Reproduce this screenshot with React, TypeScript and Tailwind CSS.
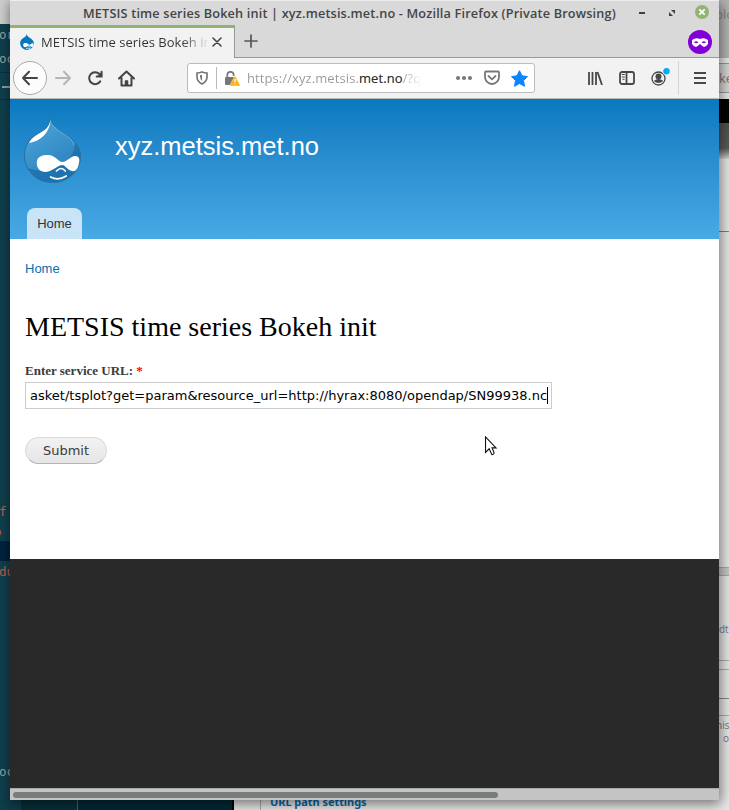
import React from 'react';

function Drop({ className, small = false }: { className: string; small?: boolean }) {
  return (
    <svg className={className} viewBox="0 0 58 65" preserveAspectRatio="none">
      <defs>
        <linearGradient id="dropBody" x1="0" y1="0" x2="0.6" y2="1">
          <stop offset="0" stopColor="#4fa8dc" />
          <stop offset="0.5" stopColor="#3c94cc" />
          <stop offset="1" stopColor="#2a80bb" />
        </linearGradient>
      </defs>
      <path d="M27 0C29 8 35 12 42 16C52 22 57.5 30 57.5 38C57.5 53 45 64.5 29 64.5C12 64.5 .5 52 .5 37C.5 25 8 19 17 14C23 11 26 8 27 0Z" fill={small ? '#0678be' : 'url(#dropBody)'} stroke={small ? 'none' : '#286f9f'} strokeWidth="1" />
      {!small && (
        <>
          <path d="M51 25C53 35 45 43 34 49C25 54 12 53 4 50C10 60 18 64 29 64C45 64 57 53 57 38C57 32 55 28 51 25Z" fill="#1769a4" opacity="0.65" />
          <path d="M27 1C27 12 19 23 5 25C8 19 13 17 18 14C23 11 26 8 27 1Z" fill="#fff" />
          <path d="M29 7C32 13 50 18 51 28" stroke="#80bfe4" strokeWidth="1" fill="none" opacity="0.6" />
        </>
      )}
      <path d="M13 45C13 38 19 37 24 37C32 37 35 44 39 44C44 44 47 38 52 38C56 38 57 41 56 45C55 51 52 54 49 53C44 52 42 47 39 47C34 47 30 53 22 54C16 54 13 50 13 45Z" fill="#fff" />
      <path d="M33 53Q38 48 42 53M27 59Q35 63 43 58" fill="none" stroke="#fff" strokeWidth={small ? 3 : 1.7} strokeLinecap="round" />
    </svg>
  );
}

function EditorWindow() {
  return (
    <div className="absolute left-0 top-0 flex h-[810px] w-[234px] flex-col overflow-hidden bg-[#10404e] font-['DejaVu_Sans_Mono',monospace] text-[12.5px] text-[#94a6a7]">
      <div className="h-6 shrink-0 bg-[#cfcfcf]" />
      <div className="h-[25px] shrink-0 pt-[2px] leading-[18px]"><span className="-ml-px">or</span></div>
      <div className="h-[24px] shrink-0 border-b border-[#0a303b] leading-[20px]"><span className="-ml-px">oc</span></div>
      <div className="h-[27px] shrink-0 border-b border-[#0a303b] pl-[2px] pt-[13px]"><div className="h-[2px] w-5 bg-[#8ba1a6]" /></div>
      <div className="h-[401px] shrink-0" />
      <div className="h-[20px] shrink-0 leading-[21px] text-[#c25c50]"><span className="-ml-px">f</span></div>
      <div className="h-[20px] shrink-0 overflow-hidden leading-[22px] text-[#c25c50]"><div className="-ml-[6px]">o</div></div>
      <div className="h-[20px] shrink-0 bg-[#002340]" />
      <div className="h-[200px] shrink-0 leading-[22px] text-[#c25c50]"><span className="-ml-px">du</span></div>
      <div className="h-[38px] shrink-0 leading-[22px]"><span className="-ml-px">oc</span></div>
      <div className="flex h-3 shrink-0">
        <div className="w-[21px] bg-[#0e3d4b]" />
        <div className="w-[57px] border-r border-[#47656d] bg-[#073039]" />
        <div className="grow border-r-2 border-black bg-[#002a36]" />
      </div>
    </div>
  );
}

function BackWindow() {
  return (
    <div className="absolute left-[234px] top-0 h-[810px] w-[495px] bg-[#e8e8e8] font-['Open_Sans',sans-serif] text-[13px] text-[#777]">
      <div className="ml-[485px] flex h-[798px] flex-col overflow-hidden">
        <div className="h-[58px] shrink-0 bg-[#b5b5b5] pt-[6px] leading-4 text-[#858585]"><span className="-ml-1">blo</span></div>
        <div className="h-[41px] shrink-0 pt-[5px]"><div className="h-[30px] border-y border-[#999] bg-[#d5d5d5] leading-7">ke</div></div>
        <div className="h-[24px] shrink-0 overflow-hidden bg-black text-[11px] leading-6 text-[#9b9270]"><span className="-ml-[5px]">s</span></div>
        <div className="h-9 shrink-0 bg-linear-to-b from-[#505050] via-[#5a5a5a] via-70% to-[#d5d5d5]" />
        <div className="h-[73px] shrink-0 border-b border-[#808080]" />
        <div className="h-[335px] shrink-0" />
        <div className="h-[9px] shrink-0 border-y border-[#aaa] bg-[#c8c8c8]" />
        <div className="h-[85px] shrink-0 border-b border-[#aaa] pt-[46px] text-[10px] leading-[15px]">dt:</div>
        <div className="h-[9px] shrink-0 border-b border-[#aaa]" />
        <div className="h-[29px] shrink-0 border-b border-[#888]" />
        <div className="h-[17px] shrink-0 border-b border-[#aaa]" />
        <div className="flex flex-col pt-[3px] text-[10px] leading-[13px]"><span className="-ml-[3px]">his</span><span className="pl-1">o</span></div>
      </div>
      <div className="ml-[26px] border-l border-[#aaa] pl-[9px] font-['Noto_Sans',sans-serif] text-[11px] font-bold leading-[12px] text-[#0a66a5]"><div className="-mt-[2px] pb-[2px] tracking-[-0.05px]">URL path settings</div></div>
    </div>
  );
}

function TitleBar() {
  return (
    <div className="flex h-[25px] shrink-0 items-center border-t border-[#eee] bg-[#d9d9d9] pl-[73px]">
      <div className="w-[556px] whitespace-nowrap font-['Open_Sans',sans-serif] text-[12.7px] font-semibold leading-6 tracking-[0.165px] text-[#454545]">METSIS time series Bokeh init | xyz.metsis.met.no - Mozilla Firefox (Private Browsing)</div>
      <div className="-mt-px h-[2px] w-[6px] bg-[#404040]" />
      <svg className="-mt-px ml-[23px] size-[8px]" viewBox="0 0 8 8" fill="#404040"><path d="M3 1h4v4L3 1ZM1 3l4 4H1V3Z" /></svg>
      <div className="-mt-[2px] ml-[19px] flex size-[14px] items-center justify-center rounded-full bg-[#92b372]"><svg className="size-[8px]" viewBox="0 0 8 8"><path d="M1.3 1.3l5.4 5.4M6.7 1.3L1.3 6.7" stroke="white" strokeWidth="1.8" /></svg></div>
    </div>
  );
}

function TabBar() {
  return (
    <div className="flex h-[33px] shrink-0 bg-[#d9d9d9]">
      <div className="flex w-[225px] items-center border-r border-t-[3px] border-r-[#999] border-t-[#92b372] bg-[#f2f2f2] pl-[10px]">
        <Drop small className="-mt-[3px] h-4 w-[14px]" />
        <div className="-mt-[3px] ml-[7px] w-[168px] overflow-hidden whitespace-nowrap bg-linear-to-r from-[#333] from-84% to-[#33333300] bg-clip-text font-['Open_Sans',sans-serif] text-[13px] leading-6 tracking-[0.02px] text-transparent">METSIS time series Bokeh init</div>
        <svg className="-mt-[2px] ml-[3px] size-[10px]" viewBox="0 0 10 10" stroke="#444" strokeWidth="1.6" strokeLinecap="round"><path d="M1 1l8 8M9 1L1 9" /></svg>
      </div>
      <div className="flex grow items-start justify-between border-b border-[#999] pl-[9px] pr-[7px]">
        <svg className="mt-[9px] size-[14px]" viewBox="0 0 14 14" stroke="#555" strokeWidth="1.7" strokeLinecap="round"><path d="M7 1v12M1 7h12" /></svg>
        <div className="mt-[5px] flex size-6 items-center justify-center rounded-full bg-[#8000d7]">
          <svg className="h-[9px] w-4" viewBox="0 0 16 9"><path fill="white" fillRule="evenodd" d="M0 2Q4-1 8 1Q12-1 16 2V6Q14 9 12 9Q10 8 8 6Q6 8 4 9Q2 9 0 6ZM2 4.5Q4 1.8 6.5 4.5Q4 6 2 4.5M9.5 4.5Q12 1.8 14 4.5Q12 6 9.5 4.5" /></svg>
        </div>
      </div>
    </div>
  );
}

function NavBar() {
  return (
    <div className="flex h-[41px] shrink-0 items-center border-b border-[#b8b8b8] bg-[#f2f2f2] pl-[3px] font-['Open_Sans',sans-serif]">
      <div className="flex size-[34px] items-center justify-center rounded-full border border-[#aaa] bg-[#fcfcfc]"><svg className="size-4" viewBox="0 0 16 16" fill="none" stroke="#444" strokeWidth="2" strokeLinecap="round" strokeLinejoin="round"><path d="M15 8H1M7 1.8L1 8l6 6.2" /></svg></div>
      <svg className="ml-[8px] size-4" viewBox="0 0 16 16" fill="none" stroke="#b5b5b5" strokeWidth="2" strokeLinecap="round" strokeLinejoin="round"><path d="M1 8h14M9 1.8L15 8l-6 6.2" /></svg>
      <svg className="ml-[16px] size-4" viewBox="0 0 16 16" fill="none" stroke="#444" strokeWidth="2" strokeLinecap="round"><path d="M13.2 11.4A6 6 0 1 1 12.5 4M14.6 1.8v4.7H9.7" /><path d="M10.2 6.5h4.4V2Z" fill="#444" stroke="none" /></svg>
      <svg className="ml-[15px] size-[17px]" viewBox="0 0 17 17" fill="none" stroke="#444" strokeWidth="2" strokeLinejoin="round" strokeLinecap="round"><path d="M1 8.5l7.5-7 7.5 7M3.5 8V15.5h10V8" /><path d="M7.5 15v-4h2v4" fill="#444" strokeWidth="1.5" /></svg>
      <div className="ml-[52px] flex h-[30px] w-[348px] items-center rounded-[3px] border border-[#bcbcbc] bg-white pl-2">
        <svg className="h-[14px] w-[12px]" viewBox="0 0 12 14" fill="none" stroke="#777" strokeWidth="1.7"><path d="M1 2Q3.5 2 6 1Q8.5 2 11 2V6Q11 10.5 6 13Q1 10.5 1 6Z" /><path d="M4 4.3L6 3.7V10Q4 8 4 5.5Z" fill="#777" stroke="none" /></svg>
        <div className="ml-[8px] h-[22px] w-px bg-[#bbb]" />
        <svg className="ml-[8px] h-[15px] w-[15px]" viewBox="0 0 15 15"><path d="M2.3 7V4a3.2 3.2 0 0 1 6.4 0v1" fill="none" stroke="#777" strokeWidth="1.7" /><rect y="6" width="10" height="8" rx="1" fill="#777" /><path d="M10 4.5L15 14a1 1 0 0 1-.5 1h-9a1 1 0 0 1-.5-1Z" fill="#ffae14" stroke="white" strokeWidth=".4" /><path d="M10 8v3.2M10 12.5v1.1" stroke="white" strokeWidth="1.3" /></svg>
        <div className="ml-[7px] w-[173px] overflow-hidden whitespace-nowrap bg-linear-to-r from-[#999] from-90% to-[#99999910] bg-clip-text text-[13px] leading-6 tracking-[0.09px] text-transparent">https://xyz.metsis.<span className="text-[#333]">met.no</span>/?q</div>
        <div className="ml-9 flex gap-[2px]"><i className="size-[4px] rounded-full bg-[#777]" /><i className="size-[4px] rounded-full bg-[#777]" /><i className="size-[4px] rounded-full bg-[#777]" /></div>
        <svg className="ml-[12px] size-4" viewBox="0 0 16 16" fill="none" stroke="#777" strokeWidth="1.8" strokeLinecap="round" strokeLinejoin="round"><path d="M2 1.5h12q1 0 1 1V7a7 7 0 0 1-14 0V2.5q0-1 1-1Z" /><path d="M4.5 6L8 9.3 11.5 6" /></svg>
        <svg className="ml-[11px] size-[17px]" viewBox="0 0 17 17"><path d="M8.5.7l2.5 5.1 5.5.8-4 3.9 1 5.8-5-2.8-5 2.8 1-5.8-4-3.9 5.5-.8Z" fill="#0a84ff" stroke="#0a84ff" strokeLinejoin="round" /></svg>
      </div>
      <svg className="ml-[52px] h-[14px] w-4" viewBox="0 0 16 14" stroke="#484848" strokeWidth="1.8"><path d="M2 1v13M5.5 1v13M9 1v13M10.5 1l4.5 13" /></svg>
      <svg className="ml-[16px] h-[14px] w-4" viewBox="0 0 16 14" fill="none" stroke="#484848" strokeWidth="1.8"><rect x="1" y="1" width="14" height="12" rx="2" /><path d="M7.5 1v12" /><path d="M2.8 3.5h3M2.8 6h3M3.5 8.3h2" strokeWidth="1" /></svg>
      <svg className="mb-[3px] ml-[16px] h-[18px] w-[19px]" viewBox="0 0 19 18"><circle cx="7.5" cy="10.5" r="6.5" fill="none" stroke="#484848" strokeWidth="1.3" /><circle cx="7.5" cy="8.5" r="3" fill="#484848" /><path d="M2.7 13Q7.5 9.2 12.3 13Q7.5 17 2.7 13Z" fill="#484848" /><circle cx="15.5" cy="3.3" r="4" fill="#f2f2f2" /><circle cx="15.5" cy="3.3" r="3.2" fill="#00acf5" /></svg>
      <div className="ml-[8px] h-[34px] w-px bg-[#d6d6d6]" />
      <div className="ml-[15px] flex flex-col gap-[3px]"><i className="h-[2px] w-3 bg-[#484848]" /><i className="h-[2px] w-3 bg-[#484848]" /><i className="h-[2px] w-3 bg-[#484848]" /></div>
    </div>
  );
}

export default function App() {
  return (
    <div className="relative h-[810px] w-[729px] overflow-hidden">
      <EditorWindow />
      <BackWindow />
      <div className="absolute left-[10px] top-0 flex h-[800px] w-[709px] flex-col bg-white shadow-[1px_3px_12px_1px_rgba(0,0,0,0.5)]">
        <TitleBar />
        <TabBar />
        <NavBar />
        <header className="flex h-[140px] shrink-0 flex-col justify-between bg-linear-to-b from-[#0779bf] to-[#48a9e4] font-['Liberation_Sans',sans-serif]">
          <div className="flex pl-[14px] pt-[19px]">
            <Drop className="h-[65px] w-[57px]" />
            <h1 className="ml-[34px] mt-[13px] text-[25.5px] leading-[30px] text-white">xyz.metsis.met.no</h1>
          </div>
          <div className="ml-[17px] h-[31px] w-[55px] rounded-t-[8px] bg-[#c8e4f6] text-center text-[13px] leading-[31px] text-[#333]">Home</div>
        </header>
        <main className="flex h-[320px] shrink-0 flex-col items-start pl-[15px]">
          <a className="mt-[20px] font-['Liberation_Sans',sans-serif] text-[13px] leading-[20px] text-[#0071b3]">Home</a>
          <h2 className="mt-[32px] whitespace-nowrap font-['Liberation_Serif',serif] text-[28px] leading-8 text-black">METSIS time series Bokeh init</h2>
          <label className="mt-[19px] font-['Liberation_Serif',serif] text-[13px] font-bold leading-[18px] text-[#3b3b3b]">Enter service URL: <span className="text-[#ff0000]">*</span></label>
          <div className="mt-[2px] flex h-[27px] w-[527px] items-center whitespace-nowrap border border-[#ccc] pl-1 font-['DejaVu_Sans',sans-serif] text-[13px] text-black">asket/tsplot?get=param&amp;resource_url=http://hyrax:8080/opendap/SN99938.nc<span className="h-[17px] w-px shrink-0 bg-black" /></div>
          <button className="mt-[28px] h-[27px] w-[82px] rounded-full border border-[#dadada] border-b-[#b4b4b4] bg-linear-to-b from-[#f2f2f2] to-[#e6e6e6] font-['DejaVu_Sans',sans-serif] text-[13px] leading-[23px] text-[#3a3a3a]">Submit</button>
        </main>
        <div className="grow bg-[#292929]" />
        <div className="flex h-[12px] shrink-0 items-center border-t border-[#aaa] bg-[#c3c4c3] pl-[3px]"><div className="h-[6px] w-[485px] rounded-full bg-[#787d7c]" /></div>
        <svg className="absolute left-[474px] top-[436px] h-[21px] w-[14px]" viewBox="0 0 15 23"><path d="M1.5 1v17l4-4 3 6.5q3-.5 2-3.2L8.7 13H13Z" fill="white" stroke="#111" strokeWidth="1.2" /></svg>
      </div>
    </div>
  );
}
